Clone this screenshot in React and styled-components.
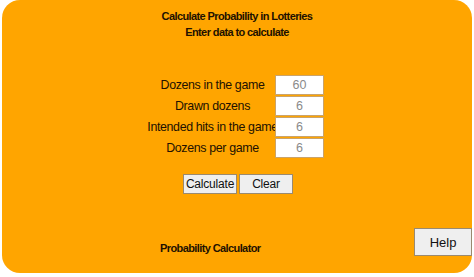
import React, { useState } from "react";
import styled, { createGlobalStyle } from "styled-components";

const GlobalStyle = createGlobalStyle`
  body {
    margin: 0;
    background: #ffffff;
    font-family: "Liberation Sans", Arial, sans-serif;
  }
`;

const fields = [
  { key: "total", label: "Dozens in the game", value: "60" },
  { key: "drawn", label: "Drawn dozens", value: "6" },
  { key: "hits", label: "Intended hits in the game", value: "6" },
  { key: "perGame", label: "Dozens per game", value: "6" },
];

const App = () => {
  const [values, setValues] = useState({});

  return (
    <>
      <GlobalStyle />
      <Panel>
        <Header>
          <Title>Calculate Probability in Lotteries</Title>
          <Title>Enter data to calculate</Title>
        </Header>
        <Form>
          {fields.map((f) => (
            <React.Fragment key={f.key}>
              <Label>{f.label}</Label>
              <Input
                type="text"
                placeholder={f.value}
                value={values[f.key] || ""}
                onChange={(e) => setValues({ ...values, [f.key]: e.target.value })}
              />
            </React.Fragment>
          ))}
        </Form>
        <Actions>
          <Button>Calculate</Button>
          <Button onClick={() => setValues({})}>Clear</Button>
        </Actions>
        <Footer>
          <FooterText>Probability Calculator</FooterText>
          <HelpButton>Help</HelpButton>
        </Footer>
      </Panel>
    </>
  );
};

export default App;

const Panel = styled.div`
  display: flex;
  flex-direction: column;
  width: 470px;
  height: 273px;
  margin-left: 2px;
  box-sizing: border-box;
  background: #ffa500;
  border-radius: 18px;
  color: #221100;
`;

const Header = styled.div`
  display: flex;
  flex-direction: column;
  align-items: center;
  padding-top: 8px;
`;

const Title = styled.div`
  font-size: 11px;
  letter-spacing: -0.6px;
  font-weight: bold;
  line-height: 16px;
`;

const Form = styled.div`
  display: grid;
  grid-template-columns: 121px 49px;
  grid-auto-rows: 20px;
  column-gap: 2px;
  row-gap: 1px;
  justify-content: center;
  margin-top: 35px;
  padding-left: 2px;
`;

const Label = styled.label`
  display: flex;
  align-items: center;
  justify-content: center;
  font-size: 12.4px;
  letter-spacing: -0.35px;
  white-space: nowrap;
`;

const Input = styled.input`
  width: 49px;
  height: 20px;
  box-sizing: border-box;
  border: 1px solid #caa36a;
  background: #ffffff;
  font-family: "Liberation Sans", Arial, sans-serif;
  font-size: 12.5px;
  text-align: center;
  padding: 0;
  outline: none;

  &::placeholder {
    color: #8a8a8a;
  }
`;

const Actions = styled.div`
  display: flex;
  justify-content: center;
  gap: 2px;
  margin-top: 16px;
  padding-left: 2px;
`;

const Button = styled.button`
  width: 54px;
  height: 20px;
  padding: 0;
  border: 1px solid #9a8a70;
  background: #efefef;
  font-family: "Liberation Sans", Arial, sans-serif;
  font-size: 12px;
  letter-spacing: -0.2px;
  color: #111;
  cursor: pointer;
`;

const Footer = styled.div`
  display: flex;
  align-items: center;
  justify-content: space-between;
  margin-top: auto;
  padding: 0 0 17px 158px;
`;

const FooterText = styled.div`
  font-size: 11px;
  letter-spacing: -0.6px;
  font-weight: bold;
  margin-top: 12px;
`;

const HelpButton = styled.button`
  width: 58px;
  height: 28px;
  border: 1px solid #9a8a70;
  background: #efefef;
  font-family: "Liberation Sans", Arial, sans-serif;
  font-size: 13px;
  color: #111;
  cursor: pointer;
`;
